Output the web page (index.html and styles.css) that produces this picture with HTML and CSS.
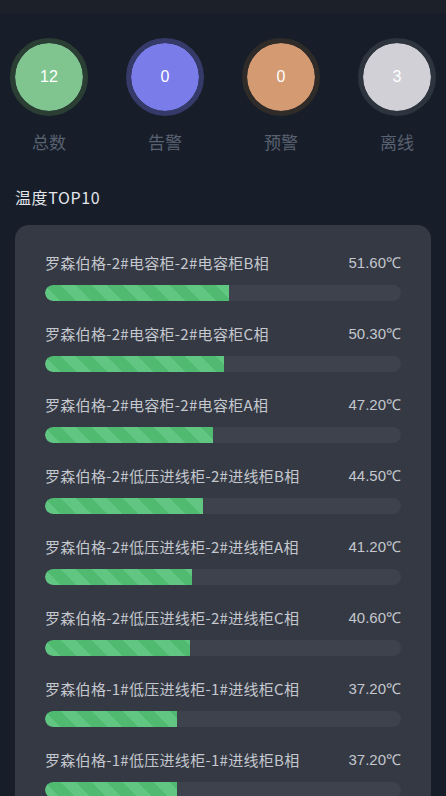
FILE: index.html
```html
<html>
<head>
  <meta charset="UTF-8">
  <title>温度监测</title>
  <link rel="stylesheet" href="styles.css">
</head>
<body>

  <div class="topbar"></div>

  <div class="stats">
    <div class="stat">
      <div class="dot green">12</div>
      <div class="stat-label">总数</div>
    </div>
    <div class="stat">
      <div class="dot purple">0</div>
      <div class="stat-label">告警</div>
    </div>
    <div class="stat">
      <div class="dot orange">0</div>
      <div class="stat-label">预警</div>
    </div>
    <div class="stat">
      <div class="dot gray">3</div>
      <div class="stat-label">离线</div>
    </div>
  </div>

  <h3 class="section-title">温度TOP10</h3>

  <div class="card" id="topList"></div>

  <script>
    var top10 = [
      ["罗森伯格-2#电容柜-2#电容柜B相", 51.6],
      ["罗森伯格-2#电容柜-2#电容柜C相", 50.3],
      ["罗森伯格-2#电容柜-2#电容柜A相", 47.2],
      ["罗森伯格-2#低压进线柜-2#进线柜B相", 44.5],
      ["罗森伯格-2#低压进线柜-2#进线柜A相", 41.2],
      ["罗森伯格-2#低压进线柜-2#进线柜C相", 40.6],
      ["罗森伯格-1#低压进线柜-1#进线柜C相", 37.2],
      ["罗森伯格-1#低压进线柜-1#进线柜B相", 37.2]
    ];
    // build rows
    var list = document.getElementById("topList");
    top10.forEach(function (item) {
      const row = document.createElement("div");
      row.className = "row";
      row.innerHTML = `
        <div class="row-head">
          <span class="row-name">${item[0]}</span>
          <span class="row-value">${item[1].toFixed(2)}℃</span>
        </div>
        <div class="track"><div class="fill" style="width: ${item[1]}%"></div></div>`;
      list.appendChild(row);
    });
  </script>
</body>
</html>
```

FILE: styles.css
```css
body {
  margin: 0;
  background: #171e2a;
  font-family: "Noto Sans CJK SC", "Liberation Sans", sans-serif;
  color: #c4c7cd;
}
.topbar {
  height: 13px;
  background: #1c2029;
}
.stats {
  display: flex;
  justify-content: space-between;
  padding: 25px 10px 0;
}
.stat {
  display: flex;
  flex-direction: column;
  align-items: center;
}
.dot {
  width: 78px;
  height: 78px;
  box-sizing: border-box;
  border: 5px solid;
  border-radius: 50%;
  background-clip: padding-box;
  display: flex;
  align-items: center;
  justify-content: center;
  font-family: "Liberation Sans", sans-serif;
  font-size: 16px;
  color: #fff;
}
.green {
  background-color: #80c590;
  border-color: #2b3e34;
}
.purple {
  background-color: #7a7ce9;
  border-color: #363a68;
}
.orange {
  background-color: #d49a72;
  border-color: #2e2b29;
}
.gray {
  background-color: #d0d0d6;
  border-color: #2d343d;
}
.stat-label {
  margin-top: 14px;
  font-size: 17px;
  line-height: 24px;
  color: #5a6170;
}
.section-title {
  margin: 32px 15px 17px;
  font-size: 16px;
  line-height: 22px;
  font-weight: normal;
  letter-spacing: 0.6px;
  color: #e2e5ea;
}
.card {
  margin: 0 15px;
  padding: 28px 30px 20px;
  background: #343944;
  border-radius: 14px;
}
.row {
  margin-bottom: 23px;
}
.row-head {
  display: flex;
  justify-content: space-between;
  font-size: 15px;
  line-height: 20px;
}
.row-name {
  letter-spacing: 0.3px;
}
.row-value {
  font-family: "Liberation Sans", sans-serif;
}
.track {
  margin-top: 12px;
  height: 16px;
  border-radius: 8px;
  background: #3d424d;
  overflow: hidden;
}
.fill {
  height: 100%;
  border-radius: 8px 0 0 8px;
  background: repeating-linear-gradient(45deg, #62c683 0 11px, #51ba71 11px 22px);
}
```
